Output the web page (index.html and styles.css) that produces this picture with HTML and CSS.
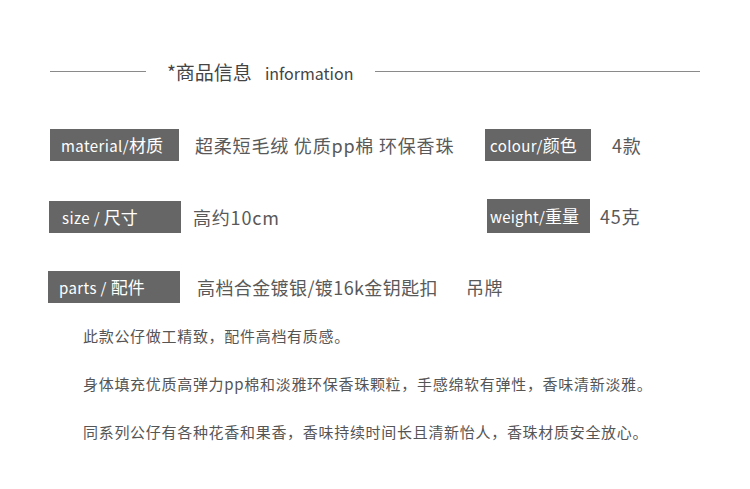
FILE: index.html
```html
<!DOCTYPE html>
<html lang="zh-CN">
<head>
    <meta charset="UTF-8">
    <meta name="viewport" content="width=device-width, initial-scale=1.0">
    <title>商品信息</title>
    <link rel="stylesheet" href="styles.css">
</head>
<body>
    <div class="page">
        <div class="title-row">
            <span class="title-line short"></span>
            <h2 class="title"><span class="title-cn">*商品信息</span><span class="title-en">information</span></h2>
            <span class="title-line long"></span>
        </div>

        <div class="specs">
            <div class="spec spec-material">
                <span class="spec-label">material/<b>材质</b></span>
                <span class="spec-value">超柔短毛绒 优质pp棉 环保香珠</span>
            </div>
            <div class="spec spec-colour">
                <span class="spec-label">colour/<b>颜色</b></span>
                <span class="spec-value">4款</span>
            </div>
            <div class="spec spec-size">
                <span class="spec-label">size / <b>尺寸</b></span>
                <span class="spec-value">高约10cm</span>
            </div>
            <div class="spec spec-weight">
                <span class="spec-label">weight/<b>重量</b></span>
                <span class="spec-value">45克</span>
            </div>
            <div class="spec spec-parts">
                <span class="spec-label">parts / <b>配件</b></span>
                <span class="spec-value">高档合金镀银/镀16k金钥匙扣<span class="tag">吊牌</span></span>
            </div>
        </div>

        <div class="desc">
            <p>此款公仔做工精致，配件高档有质感。</p>
            <p>身体填充优质高弹力pp棉和淡雅环保香珠颗粒，手感绵软有弹性，香味清新淡雅。</p>
            <p>同系列公仔有各种花香和果香，香味持续时间长且清新怡人，香珠材质安全放心。</p>
        </div>
    </div>
</body>
</html>
```

FILE: styles.css
```css
body {
    margin: 0;
    padding: 0;
    background: #fff;
    font-family: "Noto Sans CJK SC", "Noto Sans", sans-serif;
    color: #555;
}
.page {
    width: 750px;
    height: 489px;
    padding-top: 58px;
    box-sizing: border-box;
}
.title-row {
    display: flex;
    align-items: center;
    padding: 0 50px;
    height: 26px;
}
.title-line {
    height: 1px;
    background: #8a8a8a;
}
.title-line.short {
    width: 96px;
}
.title-line.long {
    flex: 1;
}
.title {
    margin: 0 22px 0 21px;
    font-weight: normal;
    color: #444;
    display: flex;
    align-items: baseline;
    white-space: nowrap;
}
.title-cn {
    font-size: 19px;
}
.title-en {
    font-size: 16px;
    margin-left: 13px;
}
.specs {
    display: grid;
    grid-template-columns: 435px 1fr;
    grid-template-rows: 32px 34px 32px;
    row-gap: 38px;
    padding-left: 48px;
    margin-top: 45px;
}
.spec {
    display: flex;
    align-items: center;
}
.spec-label {
    flex-shrink: 0;
    background: #666;
    color: #fff;
    font-size: 15px;
    letter-spacing: 0.4px;
    height: 32px;
    line-height: 32px;
    padding: 0 10px;
    box-sizing: border-box;
    white-space: nowrap;
}
.spec-label b {
    font-weight: normal;
    font-size: 17px;
    letter-spacing: 0;
}
.spec-value {
    font-size: 18px;
    letter-spacing: 0.8px;
    color: #595959;
    white-space: nowrap;
}
.spec-material .spec-label {
    margin-left: 2px;
    width: 129px;
    padding: 0 11px;
}
.spec-material .spec-value {
    margin-left: 16px;
}
.spec-colour .spec-label {
    margin-left: 2px;
    width: 106px;
    padding: 0 5px;
}
.spec-colour .spec-value {
    margin-left: 21px;
}
.spec-size {
    margin-top: 2px;
}
.spec-size .spec-label {
    margin-left: 1px;
    width: 132px;
    padding: 0 13px;
}
.spec-size .spec-value {
    margin-left: 12px;
}
.spec-weight .spec-label {
    margin-left: 4px;
    width: 103px;
    height: 34px;
    line-height: 34px;
    padding: 0 3px;
    letter-spacing: 0.2px;
}
.spec-weight .spec-value {
    margin-left: 10px;
}
.spec-parts .spec-label {
    width: 132px;
    padding: 0 11px;
}
.spec-parts .spec-value {
    margin-left: 17px;
    letter-spacing: 0.4px;
}
.tag {
    margin-left: 28px;
}
.desc {
    padding-left: 83px;
    margin-top: 23px;
}
.desc p {
    margin: 0 0 28px 0;
    font-size: 15px;
    line-height: 20px;
    letter-spacing: 0.7px;
    color: #555;
}
```
